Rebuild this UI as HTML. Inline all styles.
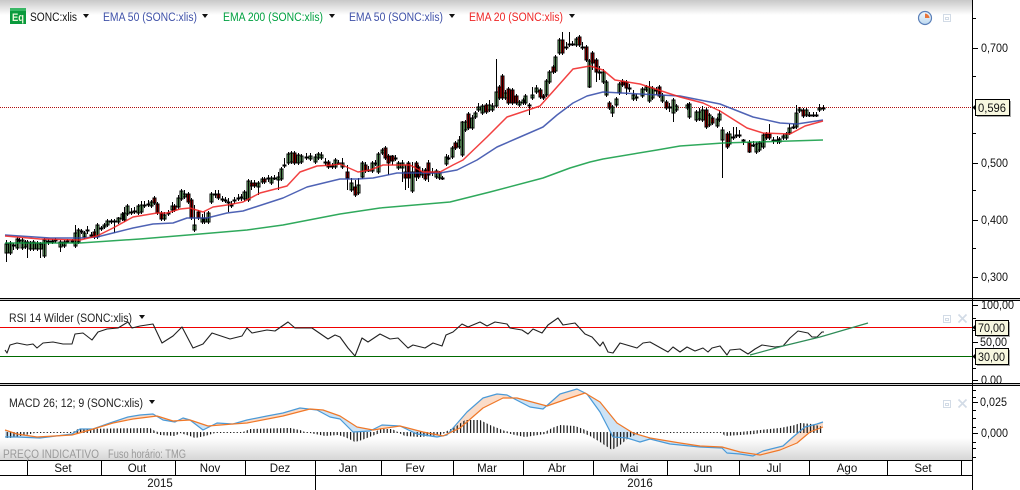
<!DOCTYPE html>
<html><head><meta charset="utf-8"><title>SONC:xlis</title>
<style>
html,body{margin:0;padding:0;background:#fff;width:1020px;height:490px;overflow:hidden}
svg{display:block}
text{font-family:"Liberation Sans",Arial,sans-serif;font-size:11.5px;fill:#111}
.lb text,text.c{text-anchor:middle}
</style></head><body>
<svg width="1020" height="490" viewBox="0 0 1020 490" xmlns="http://www.w3.org/2000/svg">
<defs>
<linearGradient id="gt" x1="0" y1="0" x2="0" y2="1"><stop offset="0" stop-color="#c8c8c8"/><stop offset="1" stop-color="#fff"/></linearGradient>
<linearGradient id="gb" x1="0" y1="0" x2="0" y2="1"><stop offset="0" stop-color="#fff"/><stop offset="1" stop-color="#d6d6d6"/></linearGradient>
<linearGradient id="gc" x1="0" y1="0" x2="0" y2="1"><stop offset="0" stop-color="#f4f8fc"/><stop offset="1" stop-color="#bcd8f0"/></linearGradient>
<pattern id="hb" width="3.333" height="10" patternUnits="userSpaceOnUse"><rect width="1.2" height="10" fill="#111"/></pattern>
<clipPath id="belowO"><path d="M5 430L17 434 37 437 72 435 90 430 113 423 133 419 157 416 173 421 190 420 208 426 233 424 247 423 283 416 310 409 323 410 340 416 357 427 373 430 400 426 423 432 443 436 460 428 483 408 503 398 517 398 547 406 567 399 585 393 600 402 617 423 633 433 650 438 680 443 700 446 722 447 740 452 760 455 780 450 797 443 810 432 823 427V500H5Z"/></clipPath>
<clipPath id="belowB"><path d="M5 437L17 437 40 438 72 434 80 429 93 429 110 423 128 417 140 415 153 414 163 420 175 422 183 418 190 420 203 430 217 423 233 424 247 420 267 416 283 413 300 408 317 410 330 417 340 419 353 432 370 431 382 425 400 426 417 434 437 437 447 435 467 412 483 398 497 394 507 395 530 407 543 409 560 394 577 389 587 394 600 412 613 437 627 438 640 442 650 439 670 444 680 445 700 447 722 448 727 453 740 454 753 456 763 451 783 446 793 437 805 427 817 424 823 422V500H5Z"/></clipPath>
</defs>

<rect x="0" y="0" width="972" height="15" fill="url(#gt)"/>

<!-- price gridline -->
<line x1="0" y1="107.5" x2="972" y2="107.5" stroke="#b01010" stroke-dasharray="1 1"/>

<!-- candles green -->
<path shape-rendering="crispEdges" fill="#90e890" stroke="#000" d="M6.5 240V262M5 244h3v9h-3zM10.5 241V255M9 243h3v10h-3zM13.5 243V250M12 245h3v1h-3zM17.5 237V250M16 239h3v9h-3zM19.5 238V243M18 240h3v1h-3zM22.5 238V250M21 240h3v8h-3zM25.5 240V249M24 242h3v5h-3zM27.5 240V258M26 242h3v1h-3zM30.5 241V251M29 243h3v6h-3zM33.5 240V251M32 242h3v7h-3zM37.5 241V251M36 243h3v6h-3zM40.5 242V258M39 244h3v5h-3zM44.5 238V258M43 240h3v16h-3zM48.5 239V245M47 241h3v1h-3zM52.5 239V244M51 241h3v1h-3zM55.5 238V243M54 240h3v1h-3zM60.5 240V252M59 242h3v5h-3zM64.5 240V248M63 242h3v4h-3zM67.5 239V243M66 241h3v1h-3zM72.5 239V243M71 241h3v1h-3zM75.5 225V248M74 233h3v13h-3zM78.5 228V244M77 230h3v12h-3zM81.5 229V234M80 231h3v1h-3zM84.5 231V239M83 233h3v4h-3zM87.5 226V234M86 230h3v1h-3zM91.5 232V238M90 235h3v1h-3zM97.5 223V239M96 225h3v12h-3zM101.5 226V231M100 228h3v1h-3zM104.5 223V229M103 225h3v2h-3zM107.5 219V227M106 221h3v4h-3zM111.5 219V224M110 221h3v1h-3zM114.5 219V233M113 221h3v1h-3zM118.5 217V224M117 218h3v4h-3zM122.5 212V221M121 214h3v5h-3zM124.5 207V222M123 213h3v7h-3zM127.5 204V216M126 206h3v8h-3zM131.5 208V215M130 212h3v1h-3zM134.5 207V214M133 211h3v1h-3zM138.5 204V215M137 206h3v7h-3zM141.5 201V214M140 205h3v7h-3zM144.5 201V208M143 205h3v1h-3zM148.5 200V207M147 204h3v1h-3zM151.5 200V208M150 202h3v4h-3zM164.5 212V221M163 215h3v4h-3zM168.5 210V216M167 213h3v1h-3zM172.5 202V213M171 206h3v4h-3zM178.5 195V209M177 198h3v9h-3zM181.5 189V201M180 191h3v8h-3zM184.5 190V199M183 194h3v3h-3zM194.5 205V232M193 225h3v5h-3zM202.5 214V224M201 218h3v4h-3zM204.5 212V224M203 218h3v4h-3zM208.5 211V224M207 213h3v9h-3zM211.5 192V204M210 194h3v8h-3zM215.5 190V198M214 194h3v1h-3zM222.5 196V202M221 199h3v1h-3zM225.5 197V203M224 200h3v1h-3zM228.5 198V212M227 202h3v1h-3zM231.5 201V208M230 205h3v1h-3zM234.5 197V204M233 200h3v1h-3zM238.5 194V201M237 198h3v1h-3zM241.5 194V201M240 197h3v1h-3zM244.5 190V201M243 192h3v7h-3zM248.5 179V202M247 181h3v19h-3zM258.5 181V195M257 183h3v4h-3zM262.5 177V184M261 179h3v3h-3zM268.5 175V182M267 178h3v1h-3zM271.5 176V185M270 178h3v5h-3zM274.5 175V180M273 178h3v1h-3zM278.5 172V190M277 177h3v3h-3zM281.5 167V181M280 169h3v10h-3zM284.5 158V168M283 165h3v1h-3zM288.5 152V165M287 154h3v9h-3zM291.5 151V164M290 153h3v9h-3zM298.5 153V165M297 155h3v8h-3zM301.5 154V164M300 156h3v6h-3zM306.5 153V160M305 157h3v1h-3zM310.5 153V161M309 156h3v3h-3zM315.5 154V164M314 157h3v5h-3zM318.5 152V160M317 154h3v4h-3zM321.5 152V160M320 155h3v3h-3zM325.5 158V166M324 162h3v1h-3zM332.5 163V169M331 166h3v1h-3zM335.5 158V169M334 160h3v7h-3zM338.5 160V165M337 163h3v1h-3zM342.5 158V169M341 163h3v4h-3zM351.5 178V192M350 183h3v7h-3zM358.5 178V195M357 185h3v8h-3zM362.5 161V179M361 163h3v14h-3zM368.5 166V172M367 170h3v1h-3zM372.5 161V173M371 163h3v8h-3zM375.5 160V166M374 163h3v1h-3zM378.5 152V174M377 154h3v18h-3zM382.5 148V155M381 150h3v3h-3zM395.5 155V161M394 158h3v1h-3zM398.5 161V170M397 163h3v5h-3zM402.5 160V182M401 163h3v5h-3zM412.5 162V193M411 172h3v19h-3zM422.5 168V178M421 172h3v3h-3zM432.5 168V176M431 172h3v1h-3zM436.5 169V179M435 171h3v6h-3zM439.5 171V180M438 173h3v5h-3zM442.5 176V180M441 178h3v1h-3zM446.5 154V166M445 157h3v7h-3zM448.5 155V160M447 158h3v1h-3zM452.5 146V159M451 148h3v9h-3zM459.5 136V149M458 140h3v7h-3zM462.5 121V157M461 122h3v33h-3zM465.5 120V132M464 122h3v8h-3zM472.5 115V130M471 118h3v10h-3zM475.5 111V119M474 113h3v4h-3zM478.5 103V112M477 107h3v3h-3zM482.5 104V115M481 106h3v7h-3zM489.5 100V112M488 105h3v5h-3zM492.5 103V112M491 106h3v4h-3zM496.5 59V108M495 92h3v14h-3zM505.5 90V100M504 93h3v5h-3zM519.5 100V107M518 102h3v3h-3zM523.5 98V105M522 100h3v3h-3zM525.5 94V105M524 96h3v7h-3zM529.5 103V115M528 105h3v1h-3zM532.5 87V100M531 95h3v3h-3zM536.5 85V94M535 88h3v4h-3zM546.5 79V97M545 81h3v14h-3zM549.5 70V84M548 72h3v10h-3zM555.5 55V73M554 57h3v14h-3zM559.5 38V55M558 40h3v13h-3zM566.5 42V50M565 47h3v1h-3zM569.5 32V47M568 44h3v1h-3zM572.5 41V46M571 44h3v1h-3zM576.5 37V47M575 39h3v6h-3zM582.5 42V50M581 47h3v1h-3zM589.5 59V88M588 61h3v26h-3zM599.5 66V80M598 72h3v1h-3zM603.5 69V84M602 72h3v10h-3zM606.5 80V97M605 82h3v13h-3zM612.5 105V117M611 107h3v6h-3zM616.5 97V107M615 99h3v6h-3zM619.5 82V95M618 84h3v9h-3zM629.5 84V92M628 88h3v1h-3zM633.5 90V101M632 95h3v4h-3zM636.5 94V101M635 97h3v1h-3zM642.5 87V98M641 89h3v7h-3zM646.5 85V92M645 87h3v3h-3zM649.5 81V103M648 87h3v14h-3zM652.5 86V100M651 88h3v10h-3zM656.5 87V95M655 90h3v1h-3zM662.5 93V103M661 95h3v6h-3zM669.5 103V112M668 107h3v1h-3zM673.5 98V122M672 100h3v13h-3zM676.5 104V112M675 106h3v4h-3zM687.5 103V110M686 105h3v3h-3zM689.5 102V119M688 104h3v13h-3zM696.5 110V122M695 112h3v8h-3zM699.5 108V121M698 112h3v7h-3zM702.5 106V122M701 110h3v10h-3zM709.5 113V127M708 115h3v10h-3zM717.5 117V128M716 119h3v7h-3zM719.5 110V122M718 114h3v6h-3zM722.5 127V178M721 130h3v10h-3zM729.5 131V146M728 134h3v10h-3zM733.5 127V140M732 137h3v1h-3zM736.5 127V138M735 135h3v1h-3zM739.5 130V138M738 135h3v1h-3zM743.5 139V145M742 140h3v1h-3zM753.5 141V147M752 145h3v1h-3zM756.5 142V154M755 144h3v8h-3zM759.5 141V152M758 143h3v7h-3zM763.5 133V149M762 135h3v12h-3zM773.5 137V144M772 140h3v1h-3zM777.5 136V144M776 140h3v1h-3zM779.5 137V144M778 139h3v3h-3zM783.5 134V140M782 136h3v2h-3zM786.5 132V140M785 134h3v4h-3zM789.5 124V135M788 128h3v5h-3zM793.5 124V129M792 127h3v1h-3zM796.5 105V129M795 113h3v14h-3zM799.5 107V113M798 109h3v2h-3zM806.5 108V117M805 110h3v5h-3zM809.5 112V117M808 115h3v1h-3zM813.5 112V117M812 115h3v1h-3zM816.5 112V117M815 115h3v1h-3zM819.5 104V112M818 108h3v2h-3zM823.5 105V111M822 108h3v1h-3z"/>
<!-- candles red -->
<path shape-rendering="crispEdges" fill="#e30000" stroke="#000" d="M94.5 229V239M93 232h3v5h-3zM154.5 196V205M153 198h3v5h-3zM157.5 202V215M156 204h3v9h-3zM161.5 211V221M160 213h3v6h-3zM174.5 204V212M173 206h3v4h-3zM188.5 192V204M187 194h3v8h-3zM191.5 198V220M190 200h3v18h-3zM198.5 210V220M197 212h3v6h-3zM218.5 190V200M217 194h3v4h-3zM251.5 180V190M250 183h3v3h-3zM254.5 180V188M253 183h3v3h-3zM264.5 177V184M263 179h3v3h-3zM294.5 151V165M293 153h3v10h-3zM328.5 160V169M327 162h3v5h-3zM347.5 165V190M346 172h3v6h-3zM355.5 180V197M354 187h3v8h-3zM365.5 162V173M364 165h3v6h-3zM385.5 146V160M384 148h3v10h-3zM388.5 154V175M387 156h3v7h-3zM392.5 155V165M391 156h3v5h-3zM405.5 165V190M404 172h3v6h-3zM408.5 161V188M407 163h3v15h-3zM416.5 161V181M415 163h3v14h-3zM418.5 165V179M417 167h3v10h-3zM425.5 168V181M424 170h3v9h-3zM428.5 160V182M427 163h3v12h-3zM455.5 141V150M454 143h3v5h-3zM468.5 112V130M467 114h3v14h-3zM486.5 103V114M485 105h3v7h-3zM499.5 85V100M498 87h3v11h-3zM502.5 74V100M501 76h3v22h-3zM508.5 87V105M507 89h3v14h-3zM512.5 88V105M511 90h3v13h-3zM516.5 94V105M515 96h3v7h-3zM540.5 88V99M539 90h3v7h-3zM543.5 94V100M542 96h3v2h-3zM553.5 65V74M552 67h3v5h-3zM562.5 32V55M561 40h3v13h-3zM579.5 35V47M578 37h3v8h-3zM586.5 45V62M585 47h3v13h-3zM592.5 51V70M591 53h3v10h-3zM596.5 58V82M595 60h3v12h-3zM609.5 101V110M608 103h3v5h-3zM622.5 79V87M621 81h3v4h-3zM626.5 80V95M625 82h3v6h-3zM659.5 85V98M658 87h3v9h-3zM666.5 100V110M665 102h3v6h-3zM706.5 108V129M705 110h3v17h-3zM712.5 116V125M711 118h3v5h-3zM727.5 132V149M726 134h3v13h-3zM749.5 140V153M748 142h3v10h-3zM766.5 132V140M765 134h3v4h-3zM769.5 124V140M768 134h3v4h-3zM803.5 108V118M802 110h3v6h-3z"/>

<!-- EMAs -->
<g fill="none" stroke-linejoin="round" stroke-width="1.5" stroke-opacity=".85">
<polyline stroke="#0a9a40" points="5,243 75,243 80,243 140,239 200,234 247,230 283,225 340,214 380,208 450,202 490,192 543,178 570,168 590,162 603,159 657,150 680,146 723,143 823,140"/>
<polyline stroke="#3048a8" points="5,235 50,238 80,238 97,237 113,233 133,228 153,224 173,223 187,218 207,218 227,213 243,211 283,198 307,187 340,179 357,179 373,178 397,173 440,173 457,170 477,160 497,147 520,137 543,127 557,115 573,103 587,96 603,92 640,94 680,96 720,104 753,117 780,123 797,124 823,120"/>
<polyline stroke="#f02020" points="5,236 40,239 80,240 97,236 113,228 133,217 157,213 167,213 180,209 190,208 203,212 213,207 227,205 243,202 260,193 287,186 300,172 317,166 333,165 340,164 358,172 370,170 383,165 410,165 423,172 440,172 453,165 463,160 487,137 507,117 540,106 557,87 573,69 590,66 603,70 615,80 640,84 680,97 703,103 720,111 747,128 763,133 790,134 805,126 823,121"/>
</g>

<!-- RSI -->
<line x1="0" y1="327.5" x2="972" y2="327.5" stroke="#f00000"/>
<line x1="0" y1="356.5" x2="972" y2="356.5" stroke="#006a00"/>
<polyline fill="none" stroke="#222" stroke-width="1.1" stroke-linejoin="round" points="5,350 7,353 10,345 17,343 27,345 33,344 37,348 43,343 53,342 63,344 72,344 75,334 83,333 92,340 98,332 107,329 118,328 128,322 132,328 140,326 153,324 162,343 173,336 182,327 193,348 203,344 212,333 230,339 242,336 247,328 252,333 267,330 275,331 288,322 295,328 312,328 328,339 335,335 340,337 348,348 355,356 362,338 368,342 380,334 390,339 398,338 408,348 413,345 425,348 433,343 442,346 446,335 453,332 462,324 468,327 480,322 487,326 495,322 507,324 510,328 522,330 528,334 533,329 542,333 548,325 558,318 563,325 575,323 585,334 592,337 600,346 603,342 608,352 613,353 620,343 637,348 643,343 650,342 668,352 673,347 680,352 687,347 695,351 703,348 708,352 712,348 720,346 727,355 730,350 740,349 748,354 755,349 762,345 775,347 783,346 790,338 798,331 808,333 812,337 817,337 822,332 824,332"/>
<polyline fill="none" stroke="#2e8b57" stroke-width="1.2" points="750,355 783,346 820,337 868,323"/>

<!-- MACD -->
<rect x="0" y="438" width="972" height="22" fill="url(#gb)"/>
<g clip-path="url(#belowO)"><path fill="#cde3f5" d="M5 437L17 437 40 438 72 434 80 429 93 429 110 423 128 417 140 415 153 414 163 420 175 422 183 418 190 420 203 430 217 423 233 424 247 420 267 416 283 413 300 408 317 410 330 417 340 419 353 432 370 431 382 425 400 426 417 434 437 437 447 435 467 412 483 398 497 394 507 395 530 407 543 409 560 394 577 389 587 394 600 412 613 437 627 438 640 442 650 439 670 444 680 445 700 447 722 448 727 453 740 454 753 456 763 451 783 446 793 437 805 427 817 424 823 422V380H5Z"/></g>
<g clip-path="url(#belowB)"><path fill="#fbdcc8" d="M5 430L17 434 37 437 72 435 90 430 113 423 133 419 157 416 173 421 190 420 208 426 233 424 247 423 283 416 310 409 323 410 340 416 357 427 373 430 400 426 423 432 443 436 460 428 483 408 503 398 517 398 547 406 567 399 585 393 600 402 617 423 633 433 650 438 680 443 700 446 722 447 740 452 760 455 780 450 797 443 810 432 823 427V380H5Z"/></g>
<polygon fill="url(#hb)" points="5,432 73,432 78,429 150,428 155,431 158,432 243,432 250,429 290,428 300,430 305,432 375,432 380,429 392,429 398,432 445,432 455,427 465,420 480,420 490,425 505,431 510,432 545,432 552,428 560,425 575,426 583,429 590,432 740,432 760,430 780,428 795,425 800,423 812,424 823,427 823,433 760,433 755,434 725,436 722,433 640,433 630,437 620,445 612,450 600,442 590,436 583,433 550,433 545,434 525,437 515,435 507,433 445,433 440,435 420,437 405,436 399,433 380,433 372,436 362,440 355,442 345,437 338,435 325,436 310,433 245,433 215,433 205,436 195,438 190,436 180,433 175,436 160,435 155,433 35,433 20,436 10,438 5,438"/>
<g fill="none" stroke-linejoin="round" stroke-width="1.2">
<polyline stroke="#4a9ad8" points="5,437 17,437 40,438 72,434 80,429 93,429 110,423 128,417 140,415 153,414 163,420 175,422 183,418 190,420 203,430 217,423 233,424 247,420 267,416 283,413 300,408 317,410 330,417 340,419 353,432 370,431 382,425 400,426 417,434 437,437 447,435 467,412 483,398 497,394 507,395 530,407 543,409 560,394 577,389 587,394 600,412 613,437 627,438 640,442 650,439 670,444 680,445 700,447 722,448 727,453 740,454 753,456 763,451 783,446 793,437 805,427 817,424 823,422"/>
<polyline stroke="#f07828" points="5,430 17,434 37,437 72,435 90,430 113,423 133,419 157,416 173,421 190,420 208,426 233,424 247,423 283,416 310,409 323,410 340,416 357,427 373,430 400,426 423,432 443,436 460,428 483,408 503,398 517,398 547,406 567,399 585,393 600,402 617,423 633,433 650,438 680,443 700,446 722,447 740,452 760,455 780,450 797,443 810,432 823,427"/>
</g>

<!-- panel separators -->
<rect x="0" y="299" width="1020" height="1" fill="#cfcfcf"/>
<rect x="0" y="384" width="1020" height="1" fill="#cfcfcf"/>
<g stroke="#000" fill="none">
<path d="M0 298.5H1020M0 300.5H1020M0 383.5H1020M0 385.5H1020"/>
<path d="M0 460.5H972M0 475.5H972"/>
<path d="M27.5 460V475M101.5 460V475M175.5 460V475M245.5 460V475M315.5 460V490M381.5 460V475M453.5 460V475M523.5 460V475M593.5 460V475M667.5 460V475M739.5 460V475M809.5 460V475M887.5 460V475M961.5 460V475"/>
<path d="M972.5 0V490"/>
<path d="M973 18.5h3M973 48.5h5M973 76.5h3M973 133.5h3M973 163.5h5M973 190.5h3M973 220.5h5M973 248.5h3M973 277.5h5"/>
<path d="M973 305.5h5M973 318.5h3M973 330.5h3M973 342.5h5M973 368.5h3M973 380.5h5"/>
<path d="M973 390.5h3M973 397.5h3M973 402.5h5M973 410.5h3M973 418.5h3M973 427.5h3M973 433.5h5M973 442.5h3M973 448.5h3M973 457.5h3"/>
</g>

<!-- header -->
<rect x="10" y="8" width="16" height="16" fill="#0a9a3c"/>
<rect x="10" y="8" width="16" height="3" fill="#39b765"/>
<text x="12" y="21" style="font-size:11px;font-weight:bold;fill:#e8f8d8" textLength="12" lengthAdjust="spacingAndGlyphs">Eq</text>
<text x="30" y="21" textLength="47" lengthAdjust="spacingAndGlyphs">SONC:xlis</text>
<text x="103" y="21" style="fill:#3f51a8" textLength="94" lengthAdjust="spacingAndGlyphs">EMA 50 (SONC:xlis)</text>
<text x="223" y="21" style="fill:#00a040" textLength="100" lengthAdjust="spacingAndGlyphs">EMA 200 (SONC:xlis)</text>
<text x="349" y="21" style="fill:#3f51a8" textLength="94" lengthAdjust="spacingAndGlyphs">EMA 50 (SONC:xlis)</text>
<text x="469" y="21" style="fill:#ee2525" textLength="94" lengthAdjust="spacingAndGlyphs">EMA 20 (SONC:xlis)</text>
<path fill="#111" d="M83 14h6l-3 4zM202 14h6l-3 4zM329 14h6l-3 4zM449 14h6l-3 4zM569 14h6l-3 4zM139 315h6l-3 4zM149 400h6l-3 4z"/>

<!-- clock icon -->
<circle cx="925" cy="18" r="6.5" fill="url(#gc)" stroke="#5a7fb8" stroke-width="1.2"/>
<path d="M925 13.5V18h4.5A4.5 4.5 0 0 0 925 13.5Z" fill="#e8743a"/>
<!-- window icons -->
<g fill="none" stroke="#d2dbe6">
<path d="M943.5 14.5h7v7h-7zM945.5 17.5h3v2h-3z"/>
<path d="M943.5 315.5h7v7h-7zM945.5 318.5h3v2h-3z"/>
<path d="M943.5 400.5h7v7h-7zM945.5 403.5h3v2h-3z"/>
<path stroke-width="1.6" d="M958.5 314.5l8 8M966.5 314.5l-8 8M958.5 399.5l8 8M966.5 399.5l-8 8"/>
</g>

<!-- panel labels -->
<text x="9" y="322" style="fill:#222" textLength="123" lengthAdjust="spacingAndGlyphs">RSI 14 Wilder (SONC:xlis)</text>
<text x="9" y="407" style="fill:#222" textLength="134" lengthAdjust="spacingAndGlyphs">MACD 26; 12; 9 (SONC:xlis)</text>
<text x="3" y="458" style="fill:#9a9a9a" textLength="96" lengthAdjust="spacingAndGlyphs">PREÇO INDICATIVO</text>
<text x="108" y="458" style="fill:#9a9a9a" textLength="78" lengthAdjust="spacingAndGlyphs">Fuso horário: TMG</text>

<!-- time axis -->
<g class="lb">
<text x="63" y="472">Set</text><text x="137" y="472">Out</text><text x="210" y="472">Nov</text><text x="280" y="472">Dez</text><text x="348" y="472">Jan</text><text x="415" y="472">Fev</text><text x="487" y="472">Mar</text><text x="557" y="472">Abr</text><text x="629" y="472">Mai</text><text x="703" y="472">Jun</text><text x="774" y="472">Jul</text><text x="847" y="472">Ago</text><text x="923" y="472">Set</text>
<text x="160" y="487">2015</text><text x="640" y="487">2016</text>
</g>

<!-- value axis -->
<g>
<text x="981" y="52" textLength="27" lengthAdjust="spacingAndGlyphs">0,700</text>
<text x="981" y="167" textLength="27" lengthAdjust="spacingAndGlyphs">0,500</text>
<text x="981" y="224" textLength="27" lengthAdjust="spacingAndGlyphs">0,400</text>
<text x="981" y="281" textLength="27" lengthAdjust="spacingAndGlyphs">0,300</text>
<text x="981" y="309" textLength="33" lengthAdjust="spacingAndGlyphs">100,00</text>
<text x="980" y="346" textLength="27" lengthAdjust="spacingAndGlyphs">50,00</text>
<text x="980" y="406" textLength="27" lengthAdjust="spacingAndGlyphs">0,025</text>
<text x="981" y="437" textLength="27" lengthAdjust="spacingAndGlyphs">0,000</text>
<text x="981" y="384" textLength="21" lengthAdjust="spacingAndGlyphs">0,00</text>
<rect x="973" y="384" width="47" height="2" fill="#cfcfcf"/>
<path stroke="#000" d="M973 383.5H1020M973 385.5H1020"/>
</g>

<!-- value tags -->
<g>
<rect x="977" y="101" width="34" height="16" fill="#a8a8a8"/>
<path d="M972.5 107.5l3.5-3.5v7z" fill="#000"/>
<rect x="975.5" y="99.5" width="34" height="16" fill="#f8f8e0" stroke="#000"/>
<text x="978" y="112" textLength="28" lengthAdjust="spacingAndGlyphs">0,596</text>
<rect x="977" y="322" width="33" height="15" fill="#a8a8a8"/>
<path d="M972.5 327.5l3.5-3.5v7z" fill="#000"/>
<rect x="975.5" y="320.5" width="33" height="15" fill="#f8f8e0" stroke="#000"/>
<text x="978" y="332" textLength="27" lengthAdjust="spacingAndGlyphs">70,00</text>
<rect x="977" y="350" width="33" height="16" fill="#a8a8a8"/>
<path d="M972.5 356.5l3.5-3.5v7z" fill="#000"/>
<rect x="975.5" y="348.5" width="33" height="16" fill="#f8f8e0" stroke="#000"/>
<text x="978" y="361" textLength="27" lengthAdjust="spacingAndGlyphs">30,00</text>
</g>
</svg>
</body></html>
